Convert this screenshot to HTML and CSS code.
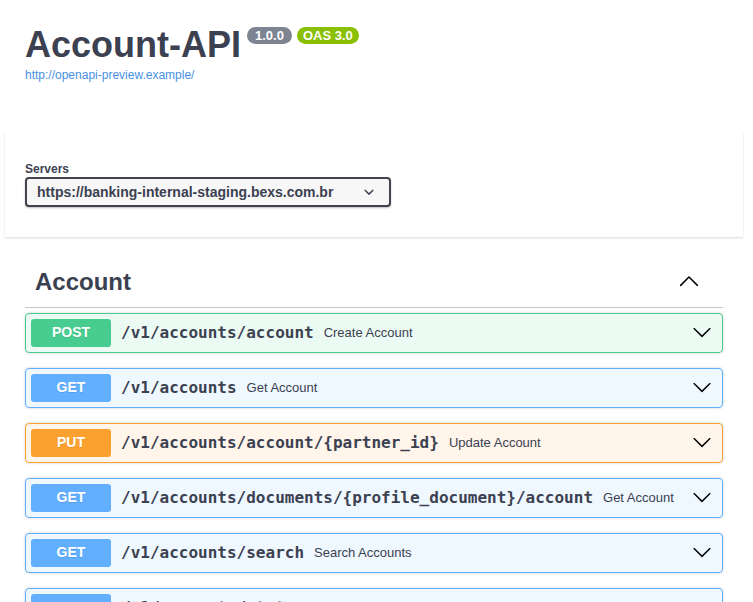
FILE: index.html
```html
<!DOCTYPE html>
<html lang="en">
<head>
<meta charset="utf-8">
<title>Account-API</title>
<link rel="stylesheet" href="styles.css">
</head>
<body>
<div class="info">
  <h2 class="title">
    <span class="title-text">Account-API</span>
    <span class="badge badge-version">1.0.0</span>
    <span class="badge badge-oas">OAS 3.0</span>
  </h2>
  <a class="url" href="#">http://openapi-preview.example/</a>
</div>

<div class="scheme-container">
  <div class="servers-title">Servers</div>
  <div class="select">
    <span class="select-text">https://banking-internal-staging.bexs.com.br</span>
    <svg class="select-arrow" width="20" height="20" viewBox="0 0 20 20"><path d="M13.418 7.859a.695.695 0 0 1 .978 0 .68.68 0 0 1 0 .969l-3.908 3.83a.697.697 0 0 1-.979 0l-3.908-3.830a.68.68 0 0 1 0-.969.695.695 0 0 1 .978 0L10 11l3.418-3.141z" fill="#3b4151"/></svg>
  </div>
</div>

<div class="tag-section">
  <div class="opblock-tag">
    <h3 class="tag-name">Account</h3>
    <svg class="tag-arrow" width="24" height="24" viewBox="0 0 20 20"><path d="M17.418 14.908c-.245.245-.645.245-.89 0L10 8.38l-6.528 6.527a.63.63 0 0 1-.89 0 .63.63 0 0 1 0-.89l6.973-6.973a.63.63 0 0 1 .89 0l6.973 6.973c.245.244.245.645 0 .89z" fill="#000"/></svg>
  </div>

  <div class="opblock op-post">
    <span class="method">POST</span>
    <span class="path">/v1/accounts/account</span>
    <span class="summary">Create Account</span>
    <svg class="op-arrow" width="20" height="20" viewBox="0 0 20 20"><path d="M17.418 6.109c.272-.268.709-.268.979 0s.271.701 0 .969l-7.908 7.83a.697.697 0 0 1-.979 0l-7.908-7.830c-.27-.268-.27-.701 0-.969.271-.268.709-.268.979 0L10 13.25l7.418-7.141z" fill="#000"/></svg>
  </div>

  <div class="opblock op-get">
    <span class="method">GET</span>
    <span class="path">/v1/accounts</span>
    <span class="summary">Get Account</span>
    <svg class="op-arrow" width="20" height="20" viewBox="0 0 20 20"><path d="M17.418 6.109c.272-.268.709-.268.979 0s.271.701 0 .969l-7.908 7.83a.697.697 0 0 1-.979 0l-7.908-7.830c-.27-.268-.27-.701 0-.969.271-.268.709-.268.979 0L10 13.25l7.418-7.141z" fill="#000"/></svg>
  </div>

  <div class="opblock op-put">
    <span class="method">PUT</span>
    <span class="path">/v1/accounts/account/{partner_id}</span>
    <span class="summary">Update Account</span>
    <svg class="op-arrow" width="20" height="20" viewBox="0 0 20 20"><path d="M17.418 6.109c.272-.268.709-.268.979 0s.271.701 0 .969l-7.908 7.83a.697.697 0 0 1-.979 0l-7.908-7.830c-.27-.268-.27-.701 0-.969.271-.268.709-.268.979 0L10 13.25l7.418-7.141z" fill="#000"/></svg>
  </div>

  <div class="opblock op-get">
    <span class="method">GET</span>
    <span class="path">/v1/accounts/documents/{profile_document}/account</span>
    <span class="summary">Get Account</span>
    <svg class="op-arrow" width="20" height="20" viewBox="0 0 20 20"><path d="M17.418 6.109c.272-.268.709-.268.979 0s.271.701 0 .969l-7.908 7.83a.697.697 0 0 1-.979 0l-7.908-7.830c-.27-.268-.27-.701 0-.969.271-.268.709-.268.979 0L10 13.25l7.418-7.141z" fill="#000"/></svg>
  </div>

  <div class="opblock op-get">
    <span class="method">GET</span>
    <span class="path">/v1/accounts/search</span>
    <span class="summary">Search Accounts</span>
    <svg class="op-arrow" width="20" height="20" viewBox="0 0 20 20"><path d="M17.418 6.109c.272-.268.709-.268.979 0s.271.701 0 .969l-7.908 7.83a.697.697 0 0 1-.979 0l-7.908-7.830c-.27-.268-.27-.701 0-.969.271-.268.709-.268.979 0L10 13.25l7.418-7.141z" fill="#000"/></svg>
  </div>

  <div class="opblock op-get">
    <span class="method">GET</span>
    <span class="path">/v1/accounts/status</span>
    <span class="summary">Get Account Status</span>
    <svg class="op-arrow" width="20" height="20" viewBox="0 0 20 20"><path d="M17.418 6.109c.272-.268.709-.268.979 0s.271.701 0 .969l-7.908 7.83a.697.697 0 0 1-.979 0l-7.908-7.830c-.27-.268-.27-.701 0-.969.271-.268.709-.268.979 0L10 13.25l7.418-7.141z" fill="#000"/></svg>
  </div>
</div>
</body>
</html>
```

FILE: styles.css
```css
html, body {
  margin: 0;
  padding: 0;
  background: #fff;
}

body {
  font-family: "Liberation Sans", Arial, sans-serif;
  color: #3b4151;
  overflow: hidden;
}

.info {
  padding: 25px 25px 0;
}

.title {
  display: flex;
  align-items: flex-start;
  margin: 0;
  font-size: 36px;
  font-weight: 700;
  color: #3b4151;
}

.title-text {
  line-height: 40px;
}

.badge {
  display: inline-block;
  margin-top: 2px;
  height: 17px;
  line-height: 17px;
  padding: 0 8px;
  border-radius: 57px;
  font-size: 13px;
  font-weight: 700;
  color: #fff;
}

.badge-version {
  margin-left: 6px;
  background: #7d8492;
}

.badge-oas {
  margin-left: 5px;
  padding: 0 6px;
  background: #89bf04;
}

.url {
  display: block;
  margin-top: 3px;
  font-size: 12px;
  line-height: 14px;
  color: #4990e2;
  text-decoration: none;
}

.scheme-container {
  margin: 50px 10px 21px 5px;
  padding: 30px 20px;
  background: #fff;
  box-shadow: 0 1px 2px 0 rgba(0, 0, 0, 0.15);
}

.servers-title {
  font-size: 12px;
  font-weight: 700;
  line-height: 15px;
}

.select {
  box-sizing: border-box;
  width: 366px;
  height: 30px;
  display: flex;
  align-items: center;
  justify-content: space-between;
  padding: 0 10px 0 10px;
  background: #f7f7f7;
  border: 2px solid #41444e;
  border-radius: 4px;
  box-shadow: 0 1px 2px 0 rgba(0, 0, 0, 0.25);
  font-size: 14px;
  font-weight: 700;
  color: #3b4151;
}

.select-arrow {
  display: block;
  flex: none;
}

.tag-section {
  padding: 0 30px 0 25px;
}

.opblock-tag {
  display: flex;
  align-items: center;
  justify-content: space-between;
  padding: 9px 22px 11px 10px;
  margin-bottom: 5px;
  border-bottom: 1px solid rgba(59, 65, 81, 0.3);
}

.tag-name {
  margin: 0;
  font-size: 24px;
  font-weight: 700;
  line-height: 29px;
  color: #3b4151;
}

.tag-arrow {
  display: block;
  margin-bottom: 3px;
}

.opblock {
  display: flex;
  align-items: center;
  height: 40px;
  box-sizing: border-box;
  padding: 0 10px 0 5px;
  margin-bottom: 15px;
  border: 1px solid;
  border-radius: 4px;
  box-shadow: 0 0 3px rgba(0, 0, 0, 0.19);
}

.method {
  flex: none;
  width: 80px;
  height: 28px;
  line-height: 26px;
  text-align: center;
  border-radius: 3px;
  font-size: 14px;
  font-weight: 700;
  color: #fff;
  text-shadow: 0 1px 0 rgba(0, 0, 0, 0.1);
}

.path {
  padding: 0 10px;
  margin-bottom: 2px;
  font-family: "DejaVu Sans Mono", monospace;
  font-size: 16px;
  font-weight: 600;
  color: #3b4151;
  white-space: nowrap;
}

.summary {
  flex: 1;
  margin-bottom: 2px;
  font-size: 13px;
  color: #3b4151;
  white-space: nowrap;
}

.op-arrow {
  display: block;
  flex: none;
  margin-bottom: 3px;
}

.op-post {
  background: rgba(73, 204, 144, 0.1);
  border-color: #49cc90;
}

.op-post .method {
  background: #49cc90;
}

.op-get {
  background: rgba(97, 175, 254, 0.1);
  border-color: #61affe;
}

.op-get .method {
  background: #61affe;
}

.op-put {
  background: rgba(252, 161, 48, 0.1);
  border-color: #fca130;
}

.op-put .method {
  background: #fca130;
}
```
